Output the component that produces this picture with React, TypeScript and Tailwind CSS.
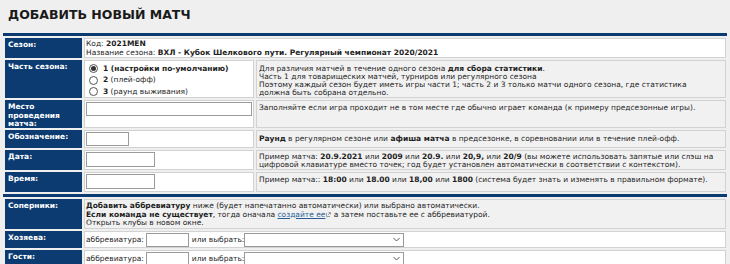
import React from "react";

const LABEL = "w-[77px] shrink-0 bg-[#0b3b71] text-white font-bold px-[3px] pt-[3px] leading-[8.5px]";
const MID = "w-[170px] shrink-0 bg-white border border-[#d2d2d2] px-[1px]";
const DESC = "flex-1 bg-[#f1f1f1] border border-[#d2d2d2] px-[2px] whitespace-nowrap overflow-hidden leading-[8px]";

function Radio({ checked }: { checked?: boolean }) {
  return (
    <span className="w-[9px] h-[9px] rounded-full border border-[#555] bg-white flex items-center justify-center shrink-0">
      {checked && <span className="w-[5px] h-[5px] rounded-full bg-[#333]" />}
    </span>
  );
}

function Select() {
  return (
    <div className="w-[160px] h-[14px] bg-white border border-[#9a9a9a] flex items-center justify-end pr-[3px]">
      <svg width="7" height="5" viewBox="0 0 7 5">
        <path d="M0.5 1 L3.5 4 L6.5 1" fill="none" stroke="#555" strokeWidth="1" />
      </svg>
    </div>
  );
}

export default function App() {
  return (
    <div className="w-[730px] h-[264px] overflow-hidden bg-[#efefef] text-[#1e1e1e] text-[7.5px] font-['DejaVu_Sans',Verdana,sans-serif]">
      {/* Title */}
      <h1 className="px-[8px] pt-[7px] h-[33px] text-[12.5px] leading-[15px] font-bold text-[#1a1a1a]">
        ДОБАВИТЬ НОВЫЙ МАТЧ
      </h1>

      <div className="mx-[3px] w-[724px] flex flex-col gap-[2px]">
        <div className="h-[3px] bg-[#0b3b71]" />

        <div className="flex flex-col gap-[2px] pl-[2px] pr-[1px]">
          {/* Сезон */}
          <div className="flex gap-[2px] h-[20px]">
            <div className={LABEL}>Сезон:</div>
            <div className="flex-1 bg-white border border-[#d2d2d2] px-[1px] pt-[1px] leading-[8.5px] whitespace-nowrap">
              Код: <b>2021MEN</b>
              <br />
              Название сезона: <b>ВХЛ - Кубок Шелкового пути. Регулярный чемпионат 2020/2021</b>
            </div>
          </div>

          {/* Часть сезона */}
          <div className="flex gap-[2px] h-[38px]">
            <div className={LABEL}>Часть сезона:</div>
            <div className={`${MID} flex flex-col pt-[3px] pl-[4px] gap-[2.5px]`}>
              <div className="flex items-center gap-[5px] h-[9px]">
                <Radio checked />
                <span className="font-bold">1 (настройки по-умолчанию)</span>
              </div>
              <div className="flex items-center gap-[5px] h-[9px]">
                <Radio />
                <span>
                  <b>2</b> (плей-офф)
                </span>
              </div>
              <div className="flex items-center gap-[5px] h-[9px]">
                <Radio />
                <span>
                  <b>3</b> (раунд выживания)
                </span>
              </div>
            </div>
            <div className={`${DESC} pt-[4px]`}>
              Для различия матчей в течение одного сезона <b>для сбора статистики</b>.
              <br />
              Часть 1 для товарищеских матчей, турниров или регулярного сезона
              <br />
              Поэтому каждый сезон будет иметь игры части 1; часть 2 и 3 только матчи одного сезона, где статистика
              <br />
              должна быть собрана отдельно.
            </div>
          </div>

          {/* Место */}
          <div className="flex gap-[2px] h-[28px]">
            <div className={LABEL}>
              Место
              <br />
              проведения
              <br />
              матча:
            </div>
            <div className={`${MID} pt-[1px]`}>
              <input className="block w-full h-[14px] bg-white border border-[#9a9a9a]" />
            </div>
            <div className={`${DESC} pt-[3px]`}>
              Заполняйте если игра проходит не в том месте где обычно играет команда (к примеру предсезонные игры).
            </div>
          </div>

          {/* Обозначение */}
          <div className="flex gap-[2px] h-[18px]">
            <div className={LABEL}>Обозначение:</div>
            <div className={`${MID} pt-[1px]`}>
              <input className="block w-[43px] h-[14px] bg-white border border-[#9a9a9a]" />
            </div>
            <div className={`${DESC} pt-[4px]`}>
              <b>Раунд</b> в регулярном сезоне или <b>афиша матча</b> в предсезонке, в соревновании или в течение плей-офф.
            </div>
          </div>

          {/* Дата */}
          <div className="flex gap-[2px] h-[20px]">
            <div className={LABEL}>Дата:</div>
            <div className={`${MID} pt-[1px]`}>
              <input className="block w-[69px] h-[15px] bg-white border border-[#9a9a9a]" />
            </div>
            <div className={`${DESC} pt-[2px]`}>
              Пример матча: <b>20.9.2021</b> или <b>2009</b> или <b>20.9.</b> или <b>20,9,</b> или <b>20/9</b> (вы можете
              использовать запятые или слэш на
              <br />
              цифровой клавиатуре вместо точек; год будет установлен автоматически в соответствии с контекстом).
            </div>
          </div>

          {/* Время */}
          <div className="flex gap-[2px] h-[20px]">
            <div className={LABEL}>Время:</div>
            <div className={`${MID} pt-[1px]`}>
              <input className="block w-[69px] h-[15px] bg-white border border-[#9a9a9a]" />
            </div>
            <div className={`${DESC} pt-[3px]`}>
              Пример матча:: <b>18:00</b> или <b>18.00</b> или <b>18,00</b> или <b>1800</b> (система будет знать и
              изменять в правильном формате).
            </div>
          </div>
        </div>

        <div className="h-[3px] bg-[#0b3b71]" />

        <div className="flex flex-col gap-[2px] pl-[2px] pr-[1px]">
          {/* Соперники */}
          <div className="flex gap-[2px] h-[30px]">
            <div className={LABEL}>Соперники:</div>
            <div className="flex-1 bg-[#f1f1f1] border border-[#d2d2d2] px-[1px] pt-[2px] leading-[8.5px] whitespace-nowrap">
              <b>Добавить аббревиатуру</b> ниже (будет напечатанно автоматически) или выбрано автоматически.
              <br />
              <b>Если команда не существует</b>, тогда оначала{" "}
              <span className="text-[#2a5d96] underline">создайте ее</span>
              <svg className="inline-block align-baseline ml-[1px]" width="5" height="5" viewBox="0 0 5 5">
                <path d="M0.5 1 V4.5 H4 M2 3 L4.5 0.5 M2.5 0.5 H4.5 V2.5" fill="none" stroke="#888" strokeWidth="0.8" />
              </svg>{" "}
              а затем поставьте ее с аббревиатурой.
              <br />
              Открыть клубы в новом окне.
            </div>
          </div>

          {/* Хозяева */}
          <div className="flex gap-[2px] h-[17px]">
            <div className={LABEL}>Хозяева:</div>
            <div className="flex-1 bg-white border border-[#d2d2d2] px-[1px] flex items-center whitespace-nowrap">
              <span>аббревиатура:</span>
              <input className="block ml-[2px] w-[43px] h-[14px] bg-white border border-[#9a9a9a]" />
              <span className="ml-[3px]">или выбрать:</span>
              <Select />
            </div>
          </div>

          {/* Гости */}
          <div className="flex gap-[2px] h-[17px]">
            <div className={LABEL}>Гости:</div>
            <div className="flex-1 bg-white border border-[#d2d2d2] px-[1px] flex items-center whitespace-nowrap">
              <span>аббревиатура:</span>
              <input className="block ml-[2px] w-[43px] h-[14px] bg-white border border-[#9a9a9a]" />
              <span className="ml-[3px]">или выбрать:</span>
              <Select />
            </div>
          </div>
        </div>
      </div>
    </div>
  );
}
